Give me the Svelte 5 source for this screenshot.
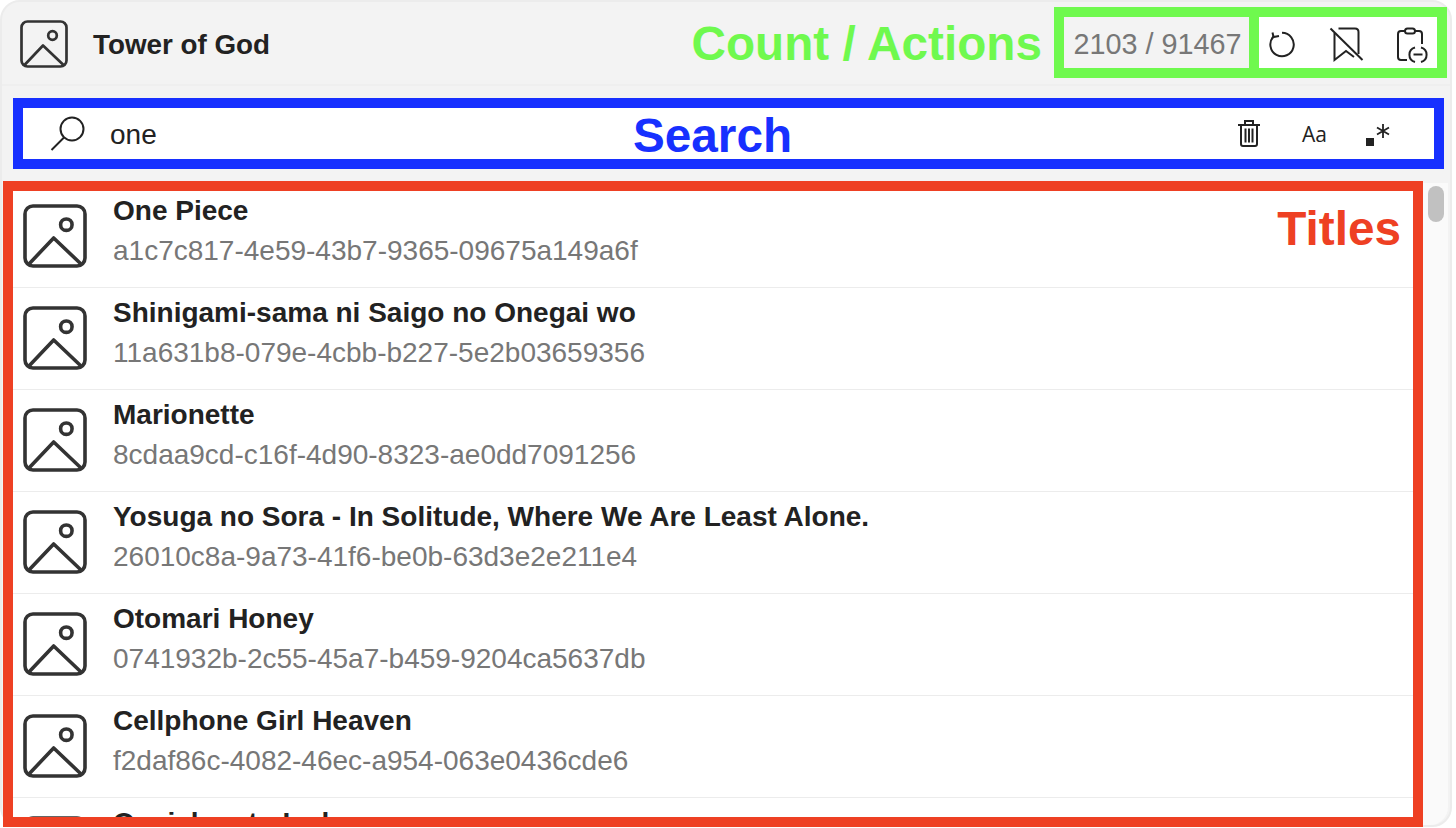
<script>
	const titles = [
		{ name: "One Piece", id: "a1c7c817-4e59-43b7-9365-09675a149a6f" },
		{ name: "Shinigami-sama ni Saigo no Onegai wo", id: "11a631b8-079e-4cbb-b227-5e2b03659356" },
		{ name: "Marionette", id: "8cdaa9cd-c16f-4d90-8323-ae0dd7091256" },
		{ name: "Yosuga no Sora - In Solitude, Where We Are Least Alone.", id: "26010c8a-9a73-41f6-be0b-63d3e2e211e4" },
		{ name: "Otomari Honey", id: "0741932b-2c55-45a7-b459-9204ca5637db" },
		{ name: "Cellphone Girl Heaven", id: "f2daf86c-4082-46ec-a954-063e0436cde6" },
		{ name: "Oneichan to Issho", id: "" },
	];
</script>

{#snippet cover(cls)}
	<svg class={cls} viewBox="0 0 48 48" fill="none" stroke="#333" stroke-width="2.700" stroke-linejoin="round">
		<rect x="1.500" y="1.500" width="45" height="45" rx="6" />
		<circle cx="32.500" cy="15.500" r="4.300" />
		<path d="M4.500 45 L23 25.500 L43.500 45" />
	</svg>
{/snippet}

<div class="window">
	<header>
		{@render cover("head-cover")}
		<span class="head-title">Tower of God</span>
		<span class="label green">Count / Actions</span>
		<div class="green-box">
			<div class="count">2103 / 91467</div>
			<div class="actions">
				<button aria-label="Reload">
					<svg viewBox="0 0 46 46" fill="none" stroke="#222" stroke-width="2">
						<path d="M23 12.800 A11.700 11.700 0 1 1 14.500 16.500" />
						<path d="M13.500 12.500 L14.500 17 L20 16" />
					</svg>
				</button>
				<button aria-label="Remove bookmark">
					<svg viewBox="0 0 46 46" fill="none" stroke="#222" stroke-width="2">
						<path d="M10.500 13 V40 L22 31 L30 37" />
						<path d="M14.500 8.500 H31 Q34.500 8.500 34.500 12 V34" />
						<path d="M6.500 8.500 L38.500 40" />
					</svg>
				</button>
				<button aria-label="Copy link">
					<svg viewBox="0 0 46 46" fill="none" stroke="#222" stroke-width="2">
						<path d="M17 11 H13 Q10 11 10 14 V37 Q10 40 13 40 H19" />
						<path d="M27 11 H31 Q34 11 34 14 V24" />
						<rect x="17" y="8.500" width="10" height="5" rx="2.500" />
						<path d="M27 27.500 A7.500 7.500 0 0 0 27 42" />
						<path d="M33 27.500 A7.500 7.500 0 0 1 33 42" />
						<path d="M25.500 34.500 H34.500" />
					</svg>
				</button>
			</div>
		</div>
	</header>

	<div class="search">
		<svg class="search-icon" viewBox="0 0 36 36" fill="none" stroke="#222" stroke-width="2">
			<circle cx="22" cy="13" r="11.500" />
			<path d="M14 21.500 L1.500 34" />
		</svg>
		<span class="query">one</span>
		<span class="label blue">Search</span>
		<div class="tools">
			<svg class="trash" viewBox="0 0 24 28" fill="none" stroke="#222" stroke-width="2">
				<path d="M1 6 H23 M8 5 V2 H16 V5" />
				<path d="M4 6 V25 Q4 27 6 27 H18 Q20 27 20 25 V6" />
				<path d="M8.500 9.500 V23.500 M12 9.500 V23.500 M15.500 9.500 V23.500" />
			</svg>
			<span class="aa">Aa</span>
			<svg class="regex" viewBox="0 0 26 26" fill="none" stroke="#222" stroke-width="1.800">
				<rect x="0" y="18" width="8" height="8" fill="#222" stroke="none" />
				<path d="M17 4 V18 M11 7.500 L23 14.500 M23 7.500 L11 14.500" />
			</svg>
		</div>
	</div>

	<div class="body">
		<div class="list">
			<span class="label red">Titles</span>
			{#each titles as t}
				<div class="row">
					{@render cover("row-cover")}
					<div class="text">
						<div class="name">{t.name}</div>
						<div class="id">{t.id}</div>
					</div>
				</div>
			{/each}
		</div>
		<div class="scrollbar"><div class="thumb"></div></div>
	</div>
</div>

<style>
	:global(body) {
		background: #fff;
		overflow: hidden;
	}

	.window {
		box-sizing: border-box;
		width: 1452px;
		height: 827px;
		background: #f3f3f3;
		border: 2px solid #ececec;
		border-radius: 20px;
		font-family: "Liberation Sans", Arial, sans-serif;
		color: #222;
		display: flex;
		flex-direction: column;
		position: relative;
	}

	header {
		flex: none;
		box-sizing: border-box;
		height: 84px;
		padding: 2px 0 0 18px;
		display: flex;
		align-items: center;
		border-bottom: 2px solid #efefef;
	}

	.head-cover {
		width: 48px;
		height: 48px;
		flex: none;
	}

	.head-title {
		margin-left: 25px;
		padding-top: 1px;
		font-size: 27.800px;
		font-weight: 700;
		flex: 1;
	}

	.label {
		font-size: 47.700px;
		font-weight: 700;
		white-space: nowrap;
	}

	.green {
		color: #6ff94e;
		margin: -2px 12px 0 0;
	}

	.green-box {
		display: flex;
		gap: 10px;
		background: #6ff94e;
		padding: 10px;
		height: 71px;
		box-sizing: border-box;
		margin: -3px 3px 0 0;
		flex: none;
	}

	.count {
		box-sizing: border-box;
		width: 185px;
		padding: 3px 0 0 2px;
		background: #f3f3f3;
		color: #777;
		font-size: 28.800px;
		display: flex;
		align-items: center;
		justify-content: center;
	}

	.actions {
		width: 178px;
		background: #fff;
		display: flex;
		gap: 18.500px;
		padding-right: 3px;
		box-sizing: border-box;
	}

	button {
		width: 46px;
		height: 51px;
		padding: 0;
		border: 0;
		background: none;
		display: flex;
		align-items: center;
	}

	button svg {
		width: 46px;
		height: 46px;
	}

	.search {
		flex: none;
		box-sizing: border-box;
		margin: 12px 6px 0 11px;
		height: 71px;
		border: 10px solid #1730ff;
		background: #fff;
		display: flex;
		align-items: center;
		position: relative;
	}

	.search-icon {
		width: 36px;
		height: 36px;
		margin-left: 27px;
		flex: none;
	}

	.query {
		margin-left: 24px;
		padding-top: 2px;
		font-size: 28px;
	}

	.blue {
		color: #1730ff;
		position: absolute;
		left: 610px;
		top: 0;
	}

	.tools {
		margin-left: auto;
		display: flex;
		align-items: center;
		margin-right: 42px;
	}

	.trash {
		width: 24px;
		height: 28px;
		margin: -2px 1px 0 0;
	}

	.aa {
		margin-left: 40px;
		font-family: "Open Sans", sans-serif;
		font-size: 21px;
		width: 26px;
	}

	.regex {
		margin: -2px 0 0 38px;
		width: 26px;
		height: 26px;
	}

	.body {
		flex: 1;
		min-height: 0;
		display: flex;
		margin-top: 12px;
	}

	.list {
		box-sizing: border-box;
		width: 1420px;
		margin-left: 1px;
		height: 646px;
		border: 10px solid #ee4023;
		background: #fff;
		overflow: hidden;
		position: relative;
		flex: none;
	}

	.red {
		color: #ee4023;
		position: absolute;
		right: 12px;
		top: 10px;
	}

	.row {
		height: 101px;
		border-bottom: 1px solid #ececec;
		display: flex;
		align-items: flex-start;
		padding-left: 10px;
	}

	.row:first-of-type {
		margin-top: -5px;
	}

	.row-cover {
		width: 64px;
		height: 64px;
		flex: none;
		margin-top: 17.500px;
	}

	.text {
		margin-left: 26px;
		padding-top: 8px;
	}

	.name {
		font-size: 28px;
		font-weight: 700;
		line-height: 34px;
		height: 34px;
	}

	.id {
		margin-top: 6px;
		font-size: 28px;
		line-height: 34px;
		height: 34px;
		color: #777;
	}

	.scrollbar {
		flex: 1;
		background: #fafafa;
		margin: 2px 2px 0 0;
		border-bottom-right-radius: 18px;
		padding: 3px 4px 0 5px;
	}

	.thumb {
		height: 36px;
		background: #c1c1c1;
		border-radius: 8px;
	}
</style>
